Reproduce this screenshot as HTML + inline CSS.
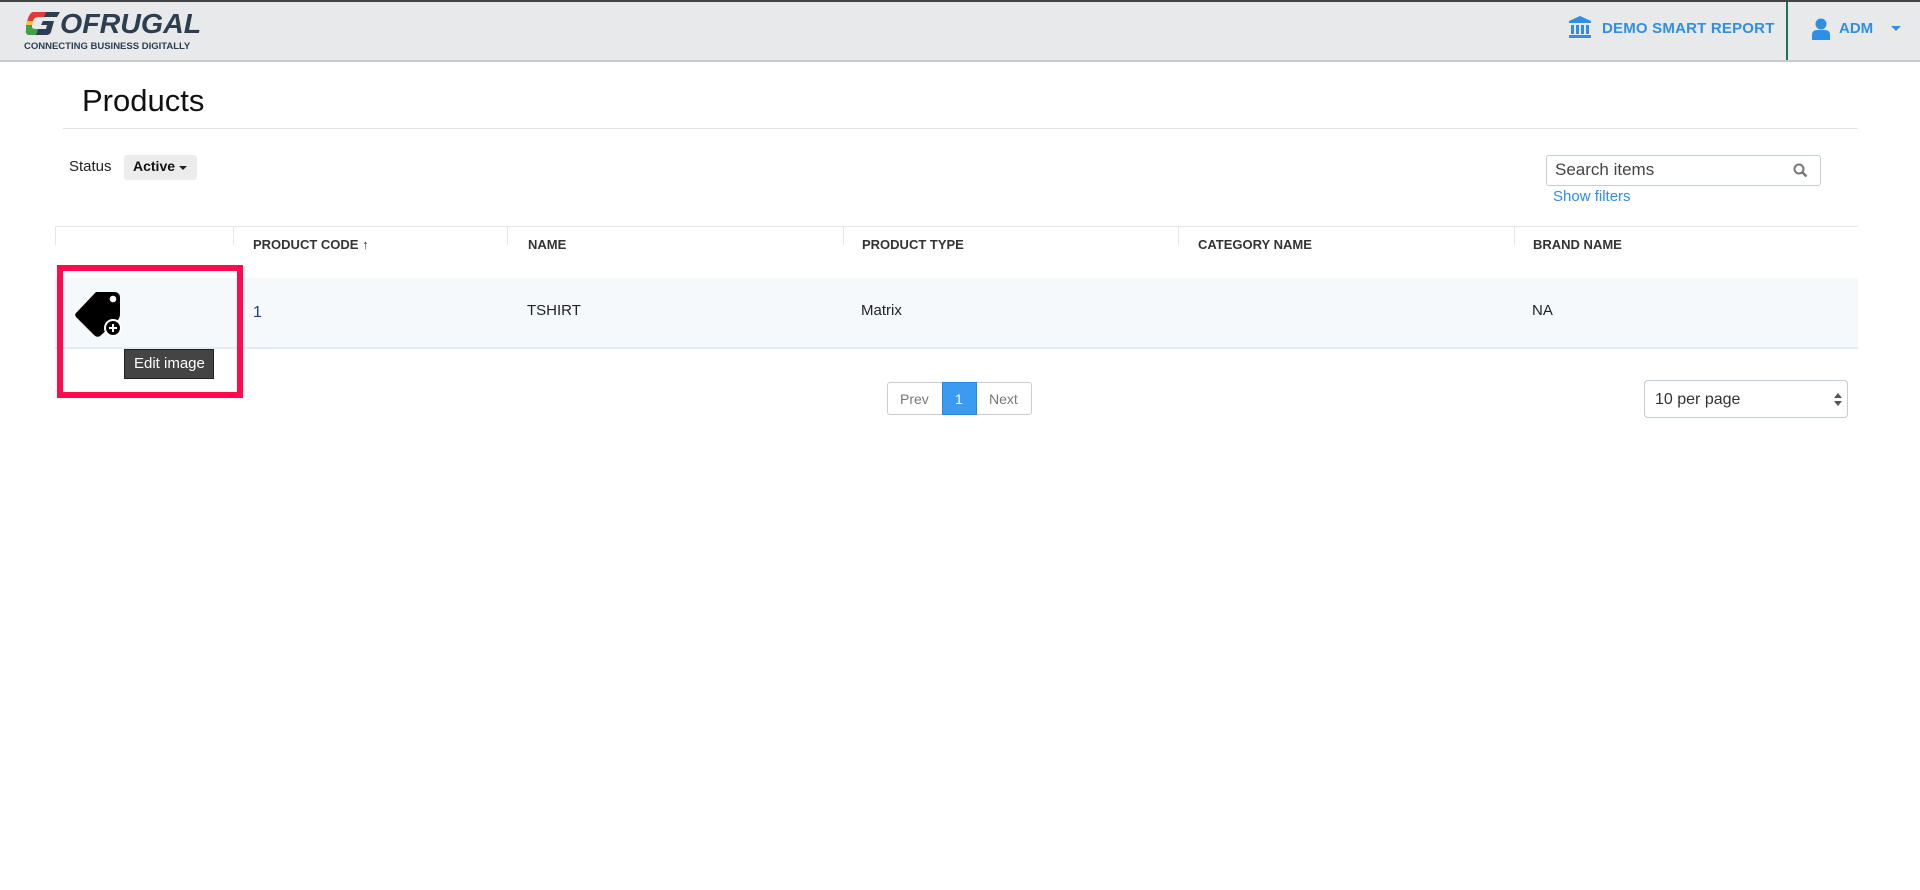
<!DOCTYPE html>
<html><head><meta charset="utf-8"><style>
*{box-sizing:border-box;margin:0;padding:0}
body{width:1920px;height:890px;background:#fff;font-family:"Liberation Sans",sans-serif;position:relative;overflow:hidden;color:#222}
.a{position:absolute}
.hdr{left:0;top:0;width:1920px;height:62px;background:#e8e9eb;border-top:2px solid #444;border-bottom:2px solid #c8c9cb}
.th{top:237px;font-size:13px;font-weight:bold;color:#333}
.td{top:302px;font-size:15px;color:#222}
.vl{top:226px;width:1px;height:19px;background:#e3e7ea}
</style></head><body>
<div class="a hdr"></div>
<!-- logo -->
<div class="a" style="left:24px;top:10px;width:190px;height:42px">
 <svg width="40" height="26" viewBox="0 0 40 26" style="position:absolute;left:0;top:0">
  <path d="M10 2 H36 L33 7 H14 Q10 7 9 11 L8 15 Q7 19 11 19 H22 L23 15 H17 L19 11 H30 L27 22 Q26 25 22 25 H6 Q1 25 2 20 L4 9 Q6 2 10 2Z" fill="#2d3e50"/>
  <path d="M10 2 H22 L20 7 H14 Q10 7 9 11 L3 11 L4 9 Q6 2 10 2Z" fill="#e53935"/>
  <path d="M3 11 H9 L8 15 H2Z" fill="#fbc02d"/>
  <path d="M2 15 H8 Q7 19 11 19 H14 L12 25 H6 Q1 25 2 20Z" fill="#43a047"/>
 </svg>
 <div class="a" style="left:36px;top:-2px;font:italic bold 28px 'Liberation Sans',sans-serif;color:#2d3e50;letter-spacing:0px;transform:scaleX(1.02);transform-origin:left">OFRUGAL</div>
 <div class="a" style="left:0;top:31px;font:bold 9.5px 'Liberation Sans',sans-serif;color:#2d3e50;white-space:nowrap">CONNECTING BUSINESS DIGITALLY</div>
</div>
<!-- right header -->
<svg class="a" style="left:1568px;top:15px" width="24" height="24" viewBox="0 0 24 24" fill="#2d8fe6"><path d="M12 1 L23 6 V8 H1 V6Z"/><rect x="3" y="10" width="3" height="9"/><rect x="8" y="10" width="3" height="9"/><rect x="13" y="10" width="3" height="9"/><rect x="18" y="10" width="3" height="9"/><rect x="1" y="20" width="22" height="3"/></svg>
<div class="a" style="left:1602px;top:20px;font-size:15px;font-weight:bold;color:#2d8fe6;letter-spacing:0.2px">DEMO SMART REPORT</div>
<div class="a" style="left:1786px;top:2px;width:2px;height:58px;background:#1f6f5c"></div>
<svg class="a" style="left:1811px;top:18px" width="20" height="22" viewBox="0 0 20 22" fill="#2d8fe6"><circle cx="10" cy="6" r="5.5"/><path d="M1 22 V17 Q1 12 6 12 H14 Q19 12 19 17 V22Z"/></svg>
<div class="a" style="left:1839px;top:20px;font-size:15px;font-weight:bold;color:#2d8fe6">ADM</div>
<div class="a" style="left:1891px;top:26px;width:0;height:0;border-left:5px solid transparent;border-right:5px solid transparent;border-top:5px solid #2d8fe6"></div>
<!-- title -->
<div class="a" style="left:82px;top:83px;font-size:31px;color:#111">Products</div>
<div class="a" style="left:63px;top:128px;width:1795px;height:1px;background:#e2e2e2"></div>
<div class="a" style="left:69px;top:158px;font-size:15px;color:#222">Status</div>
<div class="a" style="left:124px;top:155px;width:73px;height:25px;background:#ececec;border-radius:3px"></div>
<div class="a" style="left:133px;top:158px;font-size:14px;font-weight:bold;color:#111">Active</div>
<div class="a" style="left:179px;top:166px;border-left:4px solid transparent;border-right:4px solid transparent;border-top:4px solid #222"></div>
<!-- search -->
<div class="a" style="left:1546px;top:155px;width:275px;height:31px;border:1px solid #c4ccd6;border-radius:3px"></div>
<div class="a" style="left:1555px;top:160px;font-size:17px;color:#444">Search items</div>
<svg class="a" style="left:1793px;top:163px" width="15" height="15" viewBox="0 0 15 15"><circle cx="6" cy="6" r="4.5" fill="none" stroke="#777" stroke-width="2"/><path d="M9.5 9.5 L13.5 13.5" stroke="#777" stroke-width="2.4"/></svg>
<div class="a" style="left:1553px;top:188px;font-size:15px;color:#2d8fe6">Show filters</div>
<!-- table -->
<div class="a" style="left:55px;top:226px;width:1803px;height:1px;background:#e3e7ea"></div>
<div class="a vl" style="left:55px"></div><div class="a vl" style="left:233px"></div><div class="a vl" style="left:507px"></div><div class="a vl" style="left:843px"></div><div class="a vl" style="left:1178px"></div><div class="a vl" style="left:1514px"></div>
<div class="a th" style="left:253px">PRODUCT CODE <span style="font-weight:normal">&#8593;</span></div>
<div class="a th" style="left:528px">NAME</div>
<div class="a th" style="left:862px">PRODUCT TYPE</div>
<div class="a th" style="left:1198px">CATEGORY NAME</div>
<div class="a th" style="left:1533px">BRAND NAME</div>
<div class="a" style="left:55px;top:278px;width:1803px;height:71px;background:#f5f9fc;border-bottom:2px solid #e6ebef"></div>
<div class="a td" style="left:253px;top:304px;color:#1a3d8f;font-size:16px">1</div>
<div class="a td" style="left:527px">TSHIRT</div>
<div class="a td" style="left:861px">Matrix</div>
<div class="a td" style="left:1532px">NA</div>
<!-- tag icon -->
<svg class="a" style="left:74px;top:290px" width="50" height="48" viewBox="0 0 50 48"><path d="M22 2 H40 Q46 2 46 8 V24 Q46 28 43 31 L26 46 Q23 48 20 45 L2 27 Q0 24 3 22Z" fill="#000"/><circle cx="39" cy="9" r="3.3" fill="#fff"/><circle cx="39" cy="38" r="9" fill="#fff"/><circle cx="39" cy="38" r="7" fill="#000"/><path d="M35 38 H43 M39 34 V42" stroke="#fff" stroke-width="2"/></svg>
<div class="a" style="left:124px;top:349px;width:90px;height:30px;background:#444;border:1px solid #222;color:#fff;font-size:15px;padding:5px 0 0 9px">Edit image</div>
<div class="a" style="left:57px;top:265px;width:186px;height:133px;border:6px solid #ff0a4c"></div>
<!-- pagination -->
<div class="a" style="left:887px;top:382px;width:145px;height:33px;border:1px solid #ccc;border-radius:3px"></div>
<div class="a" style="left:942px;top:382px;width:35px;height:33px;background:#3a9bf0;border:1px solid #2a86d8"></div>
<div class="a" style="left:900px;top:391px;font-size:14px;color:#777">Prev</div>
<div class="a" style="left:955px;top:391px;font-size:14px;color:#fff">1</div>
<div class="a" style="left:989px;top:391px;font-size:14px;color:#777">Next</div>
<div class="a" style="left:1644px;top:380px;width:204px;height:38px;border:1px solid #c4ccd6;border-radius:4px"></div>
<div class="a" style="left:1655px;top:391px;font-size:16px;color:#333">10 per page</div>
<div class="a" style="left:1834px;top:393px;border-left:4px solid transparent;border-right:4px solid transparent;border-bottom:5px solid #555"></div>
<div class="a" style="left:1834px;top:401px;border-left:4px solid transparent;border-right:4px solid transparent;border-top:5px solid #555"></div>
</body></html>
